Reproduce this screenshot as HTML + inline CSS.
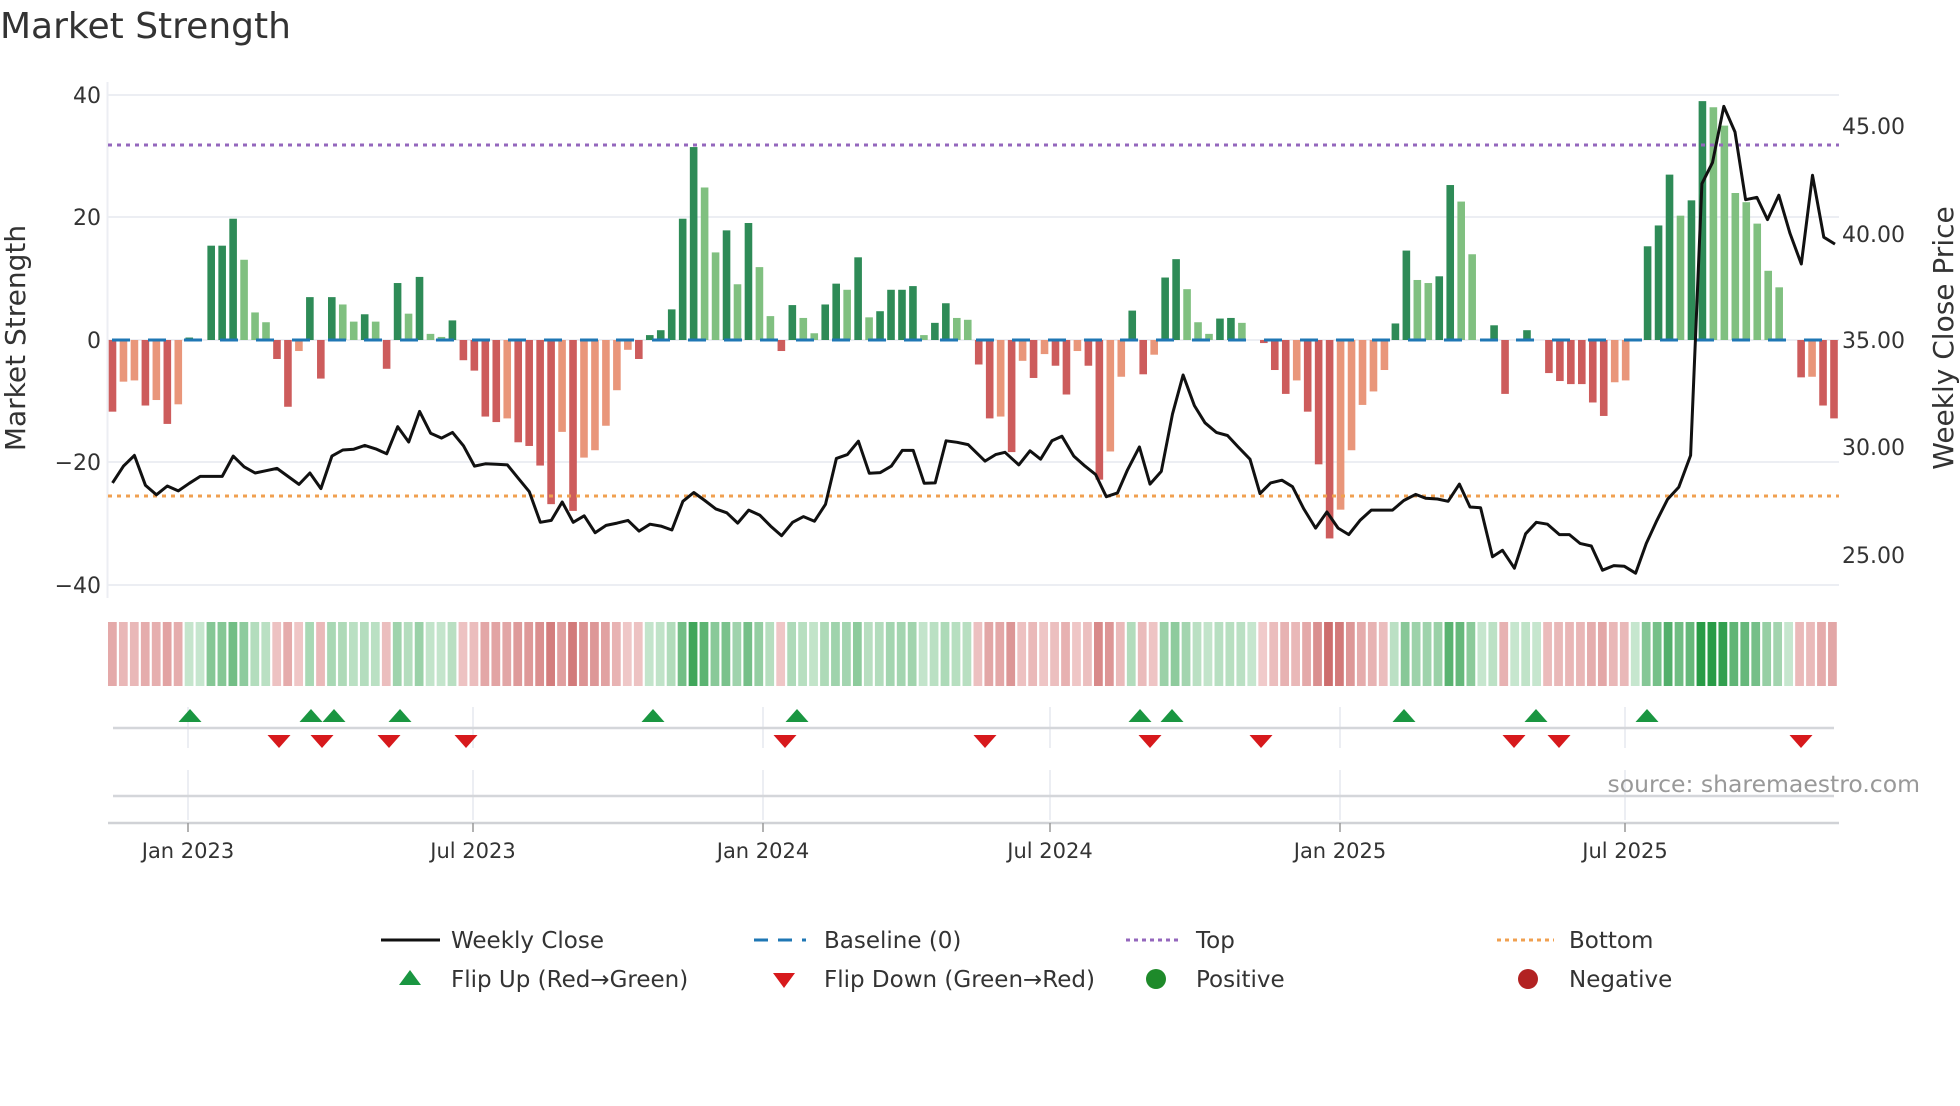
<!DOCTYPE html>
<html><head><meta charset="utf-8"><style>
html,body{margin:0;padding:0;background:#fff;}
body{width:1960px;height:1102px;overflow:hidden;font-family:"DejaVu Sans","Liberation Sans",sans-serif;}
svg text{font-family:"DejaVu Sans","Liberation Sans",sans-serif;fill:#333;}
</style></head><body>
<svg id="s" width="1960" height="1102" viewBox="0 0 1960 1102" xmlns="http://www.w3.org/2000/svg">
<text x="0" y="38" font-size="36" fill="#333">Market Strength</text>
<g stroke="#eceef3" stroke-width="2">
<line x1="108" y1="95" x2="1839" y2="95"/>
<line x1="108" y1="217" x2="1839" y2="217"/>
<line x1="108" y1="340" x2="1839" y2="340"/>
<line x1="108" y1="462" x2="1839" y2="462"/>
<line x1="108" y1="585" x2="1839" y2="585"/>
<line x1="107.5" y1="82" x2="107.5" y2="598"/>
</g>
<g font-size="22" text-anchor="end">
<text x="101" y="103">40</text><text x="101" y="225">20</text><text x="101" y="348">0</text>
<text x="101" y="470">−20</text><text x="101" y="593">−40</text>
</g>
<g font-size="22">
<text x="1842" y="134">45.00</text><text x="1842" y="242">40.00</text><text x="1842" y="348">35.00</text>
<text x="1842" y="455">30.00</text><text x="1842" y="563">25.00</text>
</g>
<text transform="translate(25,338) rotate(-90)" font-size="28" text-anchor="middle">Market Strength</text>
<text transform="translate(1953,338) rotate(-90)" font-size="28" text-anchor="middle">Weekly Close Price</text>
<g id="bars"></g>
<line x1="112" y1="340" x2="1839" y2="340" stroke="#1f77b4" stroke-width="3" stroke-dasharray="18,18"/>
<line x1="108" y1="145" x2="1839" y2="145" stroke="#9467bd" stroke-width="3" stroke-dasharray="4,5"/>
<line x1="108" y1="496" x2="1839" y2="496" stroke="#f0a050" stroke-width="3" stroke-dasharray="4,5"/>
<path id="price" fill="none" stroke="#111" stroke-width="3" stroke-linejoin="round"/>
<g id="strip"></g>
<g stroke="#e6e9ef" stroke-width="1.5">
<line x1="188" y1="707" x2="188" y2="748"/><line x1="473" y1="707" x2="473" y2="748"/><line x1="763" y1="707" x2="763" y2="748"/><line x1="1050" y1="707" x2="1050" y2="748"/><line x1="1340" y1="707" x2="1340" y2="748"/><line x1="1625" y1="707" x2="1625" y2="748"/>
<line x1="188" y1="770" x2="188" y2="820"/><line x1="473" y1="770" x2="473" y2="820"/><line x1="763" y1="770" x2="763" y2="820"/><line x1="1050" y1="770" x2="1050" y2="820"/><line x1="1340" y1="770" x2="1340" y2="820"/><line x1="1625" y1="770" x2="1625" y2="820"/>
</g>
<line x1="113" y1="728" x2="1834" y2="728" stroke="#d4d6da" stroke-width="2.5"/>
<line x1="113" y1="796" x2="1834" y2="796" stroke="#d4d6da" stroke-width="2.5"/>
<line x1="108" y1="823" x2="1839" y2="823" stroke="#d0d2d6" stroke-width="2.5"/>
<g stroke="#999" stroke-width="1.5">
<line x1="188" y1="823" x2="188" y2="832"/><line x1="473" y1="823" x2="473" y2="832"/><line x1="763" y1="823" x2="763" y2="832"/><line x1="1050" y1="823" x2="1050" y2="832"/><line x1="1340" y1="823" x2="1340" y2="832"/><line x1="1625" y1="823" x2="1625" y2="832"/>
</g>
<g id="flips"></g>
<text x="1920" y="792" font-size="23.5" style="fill:#999" text-anchor="end">source: sharemaestro.com</text>
<g font-size="21" text-anchor="middle">
<text x="188" y="858">Jan 2023</text><text x="473" y="858">Jul 2023</text><text x="763" y="858">Jan 2024</text>
<text x="1050" y="858">Jul 2024</text><text x="1340" y="858">Jan 2025</text><text x="1625" y="858">Jul 2025</text>
</g>
<g font-size="23">
<line x1="381" y1="940" x2="440" y2="940" stroke="#111" stroke-width="3"/>
<text x="451" y="948">Weekly Close</text>
<line x1="754" y1="940" x2="806" y2="940" stroke="#1f77b4" stroke-width="3" stroke-dasharray="14,10"/>
<text x="824" y="948">Baseline (0)</text>
<line x1="1126" y1="940" x2="1181" y2="940" stroke="#9467bd" stroke-width="3" stroke-dasharray="4,4"/>
<text x="1196" y="948">Top</text>
<line x1="1497" y1="940" x2="1554" y2="940" stroke="#f0a050" stroke-width="3" stroke-dasharray="4,4"/>
<text x="1569" y="948">Bottom</text>
<polygon points="410,970 399,985 421,985" fill="#1a9641"/>
<text x="451" y="987">Flip Up (Red→Green)</text>
<polygon points="773,973 795,973 784,988" fill="#d7191c"/>
<text x="824" y="987">Flip Down (Green→Red)</text>
<circle cx="1156" cy="979" r="10" fill="#1e8a2a"/>
<text x="1196" y="987">Positive</text>
<circle cx="1528" cy="979" r="10" fill="#b22222"/>
<text x="1569" y="987">Negative</text>
</g>
</svg>
<script>
var NS="http://www.w3.org/2000/svg";
function el(t,a,p){var e=document.createElementNS(NS,t);for(var k in a)e.setAttribute(k,a[k]);p.appendChild(e);return e;}
var V="-11.7,-6.8L,-6.6L,-10.7,-9.8L,-13.7,-10.5L,0.4,0,15.4,15.4,19.8,13.1L,4.5L,2.9L,-3.1,-10.9,-1.8L,7,-6.3,7,5.8L,3L,4.2,3L,-4.7,9.3,4.3L,10.3,1L,0.5L,3.2,-3.3,-5,-12.5,-13.4,-12.8L,-16.7,-17.3,-20.5,-26.8,-15L,-27.9,-19.2L,-18L,-14L,-8.2L,-1.6L,-3.1,0.8,1.6,5,19.8,31.5,24.9L,14.3L,17.9,9.1L,19.1,11.9L,3.9L,-1.8,5.7,3.6L,1.1L,5.8,9.2,8.2L,13.5,3.7L,4.7,8.2,8.2,8.8,0.8L,2.8,6,3.6L,3.3L,-4,-12.8,-12.5L,-18.3,-3.4L,-6.2,-2.3L,-4.2,-8.9,-1.8L,-4.2,-22.8,-18.2L,-6L,4.8,-5.6,-2.4L,10.2,13.2,8.3L,2.9L,1L,3.5,3.6,2.8L,0,-0.5,-4.9,-8.8,-6.6L,-11.7,-20.3,-32.4,-27.7L,-18L,-10.6L,-8.4L,-4.9L,2.7,14.6,9.8L,9.3L,10.4,25.3,22.6L,14L,0,2.4,-8.8,0,1.6,0,-5.4,-6.7,-7.2,-7.2,-10.2,-12.4,-6.9L,-6.6L,0,15.3,18.7,27,20.3L,22.8,39,38L,35L,22.5L,19L,11.3L,8.6L,0,0,-6.1,-6L,-10.7,-12.8".split(",");
V.splice(148,0,"24L");V.splice(154,1);
var n=V.length,sp=(1834-112.5)/(n-1),cw=(1839-108)/n;
var bars=document.getElementById("bars"),strip=document.getElementById("strip");
for(var i=0;i<n;i++){var s=V[i],L=s.indexOf("L")>=0,v=parseFloat(s);var cx=112.5+sp*i;
 if(v!==0){var y=v>0?340-v*6.125:340;var h=Math.abs(v)*6.125;
 var c=v>0?(L?"#80c080":"#2e8b57"):(L?"#e9967a":"#cd5c5c");
 el("rect",{x:cx-3.8,y:y,width:7.6,height:h,fill:c},bars);}
 var t=Math.min(Math.abs(v)/40,1),a,b;
 if(v>=0){a=[220,240,224];b=[40,155,70];}else{a=[246,218,218];b=[200,95,95];}
 var tt=0.12+t*0.95;if(tt>1)tt=1;
 var col="rgb("+[0,1,2].map(function(k){return Math.round(a[k]+(b[k]-a[k])*tt);}).join(",")+")";
 el("rect",{x:108+cw*i,y:622,width:cw-2.2,height:64,fill:col},strip);}
var A1=[1262,1218,1190,1268,1293,1270,1283,1263,1245,1245,1245,1192,1220,1236,1230,1224,1245,1266,1236,1277,1192,1176,1174,1164,1173,1186,1115,1155,1075,1132,1145,1130,1165,1218,1212,1213,1215,1250,1285,1365,1360,1312,1365,1348,1392,1373,1367,1360,1388,1370,1375,1385,1310,1287,1308,1330,1340,1367,1333,1346,1375,1400,1365,1350,1362,1318,1198,1188,1153,1237,1235,1218,1177,1177,1263,1262,1152,1156,1162];
var A2=[[0,1160],[8,1205],[25,1188],[40,1182],[62,1215],[80,1178],[97,1200],[115,1152],[131,1140],[150,1192],[168,1218],[185,1240],[202,1298],[220,1288],[236,1228],[255,1168],[272,1265],[290,1232],[308,1082],[325,980],[343,1060],[360,1105],[378,1130],[396,1138],[413,1168],[432,1200],[448,1290],[465,1262],[483,1255],[500,1272],[518,1330],[537,1380],[555,1338],[573,1380],[590,1397],[608,1360],[626,1333],[643,1333],[660,1333],[678,1308],[697,1292],[713,1302],[732,1304],[749,1310],[767,1265],[784,1325],[801,1327],[820,1455],[836,1438],[855,1485],[873,1395],[890,1365],[908,1370],[927,1397],[943,1397],[960,1420],[978,1427],[996,1490],[1014,1478],[1031,1480],[1049,1498],[1066,1420],[1083,1360],[1100,1305],[1118,1273],[1137,1190],[1155,480],[1172,425],[1190,278],[1208,345],[1225,522],[1243,516],[1260,574],[1278,510],[1296,610],[1314,690],[1332,458],[1350,620],[1368,638]];
var yf=600/1568,d="";
for(var i=0;i<A1.length;i++){d+=(i?"L":"M")+((180+17.55*i)/1.6).toFixed(1)+","+(A1[i]*yf).toFixed(1);}
for(var j=1;j<A2.length;j++){d+="L"+(980+A2[j][0]/1.6).toFixed(1)+","+(A2[j][1]*yf).toFixed(1);}
document.getElementById("price").setAttribute("d",d);
var fl=document.getElementById("flips");
[190,311,334,400,653,797,1140,1172,1404,1536,1647].forEach(function(x){el("polygon",{points:x+",709 "+(x-11.5)+",722 "+(x+11.5)+",722",fill:"#1a9641"},fl);});
[279,322,389,466,785,985,1150,1261,1514,1559,1801].forEach(function(x){el("polygon",{points:(x-11.5)+",735 "+(x+11.5)+",735 "+x+",748",fill:"#d7191c"},fl);});
</script>
</body></html>
